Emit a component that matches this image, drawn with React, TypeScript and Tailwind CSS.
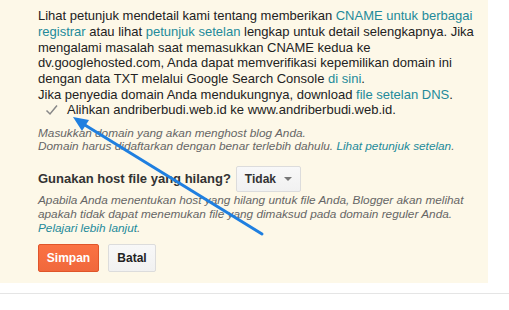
import React, { useState } from 'react';

const link = 'text-[#238a9a]';

const App: React.FC = () => {
  const [checked, setChecked] = useState(true);

  return (
    <div className="relative w-[509px] h-[310px] bg-white overflow-hidden font-['Liberation_Sans',Arial,sans-serif] text-[#222]">
      <div className="w-[488px] h-[283px] bg-[#fdf8e8] pl-[38px] pt-[8px]">
        <p className="text-[13px] leading-[15.8px] whitespace-nowrap">
          Lihat petunjuk mendetail kami tentang memberikan <a className={link}>CNAME untuk berbagai</a>
          <br />
          <a className={link}>registrar</a> atau lihat <a className={link}>petunjuk setelan</a> lengkap untuk detail selengkapnya. Jika
          <br />
          mengalami masalah saat memasukkan CNAME kedua ke
          <br />
          dv.googlehosted.com, Anda dapat memverifikasi kepemilikan domain ini
          <br />
          dengan data TXT melalui Google Search Console <a className={link}>di sini</a>.
          <br />
          Jika penyedia domain Anda mendukungnya, download <a className={link}>file setelan DNS</a>.
        </p>

        <label className="flex items-center gap-[9px] h-[16px] mt-[-1px] ml-[7px] text-[13px] whitespace-nowrap">
          <button
            onClick={() => setChecked(!checked)}
            className="w-[13px] h-[13px] flex items-center justify-center"
            aria-label="Alihkan"
          >
            {checked && (
              <svg width="13" height="12" viewBox="0 0 13 12">
                <path d="M1.5 6.5 L5 10 L12 1.5" fill="none" stroke="#888" strokeWidth="1.5" />
              </svg>
            )}
          </button>
          <span>Alihkan andriberbudi.web.id ke www.andriberbudi.web.id.</span>
        </label>

        <p className="mt-[9px] text-[11.8px] leading-[13.5px] italic text-[#666] whitespace-nowrap">
          Masukkan domain yang akan menghost blog Anda.
          <br />
          Domain harus didaftarkan dengan benar terlebih dahulu. <a className={link}>Lihat petunjuk setelan</a>.
        </p>

        <div className="flex items-center gap-[5px] mt-[12px]">
          <span className="text-[13px] font-bold text-[#333] whitespace-nowrap">Gunakan host file yang hilang?</span>
          <button className="flex items-center justify-between w-[65px] h-[26px] px-[8px] rounded-[2px] border border-[#dcdcdc] bg-gradient-to-b from-[#f8f8f8] to-[#f1f1f1] text-[12px] font-bold text-[#333]">
            Tidak
            <span className="w-0 h-0 border-l-[4px] border-r-[4px] border-t-[4px] border-l-transparent border-r-transparent border-t-[#777]" />
          </button>
        </div>

        <p className="mt-[1px] text-[11.8px] leading-[14px] italic text-[#666] whitespace-nowrap">
          Apabila Anda menentukan host yang hilang untuk file Anda, Blogger akan melihat
          <br />
          apakah tidak dapat menemukan file yang dimaksud pada domain reguler Anda.
          <br />
          <a className={link}>Pelajari lebih lanjut</a>.
        </p>

        <div className="flex gap-[9px] mt-[9px]">
          <button className="h-[28px] w-[61px] rounded-[2px] border border-[#e0552a] bg-gradient-to-b from-[#fb7243] to-[#f0683c] text-white text-[12px] font-bold">
            Simpan
          </button>
          <button className="h-[28px] w-[48px] rounded-[2px] border border-[#dcdcdc] bg-gradient-to-b from-[#f8f8f8] to-[#f1f1f1] text-[#222] text-[12px] font-bold">
            Batal
          </button>
        </div>
      </div>

      <div className="mt-[10px] border-t border-[#e5e5e5]" />

      <svg className="absolute left-0 top-0 pointer-events-none" width="509" height="310">
        <line x1="262" y1="234" x2="80" y2="122" stroke="#1f7fe0" strokeWidth="3" strokeLinecap="round" />
        <polygon points="73,117 82,131 89,120" fill="#1f7fe0" />
      </svg>
    </div>
  );
};

export default App;
